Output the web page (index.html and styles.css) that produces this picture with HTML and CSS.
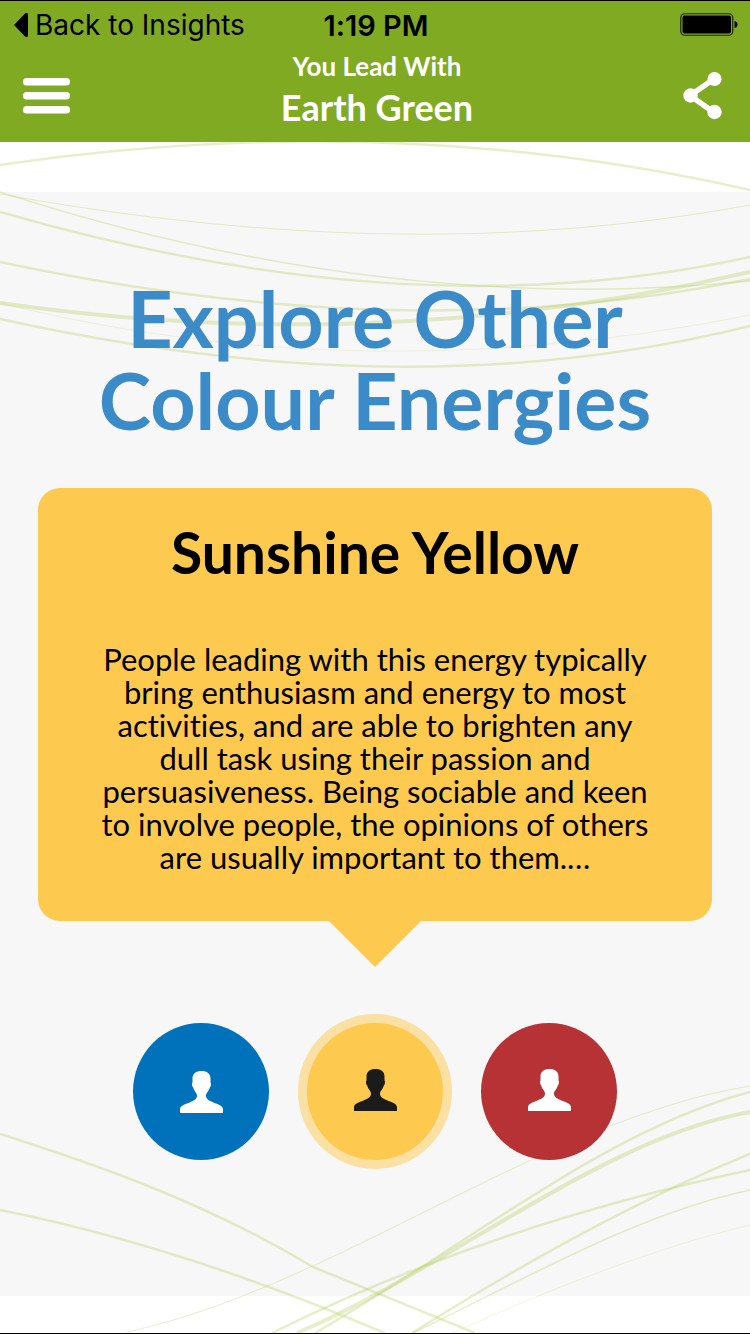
FILE: index.html
```html
<!DOCTYPE html>
<html lang="en">
<head>
<meta charset="utf-8">
<meta name="viewport" content="width=device-width, initial-scale=1">
<title>Explore Other Colour Energies</title>
<link rel="stylesheet" href="styles.css">
</head>
<body>
<header class="top">
  <div class="status">
    <a class="back" href="#"><svg width="14" height="26" viewBox="0 0 14 26" aria-hidden="true"><path d="M0 13 11 1.500Q14 -.5 14 3V23Q14 26.500 11 24.500Z"/></svg>Back to Insights</a>
    <span class="time">1:19 PM</span>
    <svg class="battery" width="58" height="24" viewBox="0 0 58 24" role="img" aria-label="Battery full"><rect x=".75" y=".75" width="52" height="21.500" rx="4" fill="none" stroke="#1c2606" stroke-width="1.200"/><rect x="2.500" y="2.500" width="48.500" height="18" rx="2"/><path d="M54.500 8Q57.500 8.500 57.500 11.500T54.500 15Z"/></svg>
  </div>
  <div class="bar">
    <button class="tool" type="button" aria-label="Menu"><svg width="48" height="36" viewBox="0 0 48 36"><g fill="#fff"><rect width="47" height="7.500" rx="3.500"/><rect y="14" width="47" height="7.500" rx="3.500"/><rect y="28" width="47" height="7.500" rx="3.500"/></g></svg></button>
    <div class="lead"><p class="lead-label">You Lead With</p><p class="lead-name">Earth Green</p></div>
    <button class="tool" type="button" aria-label="Share"><svg width="40" height="48" viewBox="0 0 40 48"><path d="M31 7 7 23.500 31 40.500" fill="none" stroke="#fff" stroke-width="5.500"/><g fill="#fff"><circle cx="31.500" cy="7" r="7"/><circle cx="7.500" cy="23.500" r="7.200"/><circle cx="31.500" cy="40" r="7.200"/></g></svg></button>
  </div>
</header>
<main class="page">
  <svg class="waves waves-top" viewBox="0 142 750 250" preserveAspectRatio="none" aria-hidden="true">
    <path class="mid" d="M0 165C250 128 500 133 750 190"/>
    <path class="fine" d="M0 194C250 239 500 251 750 205"/>
    <path class="thin" d="M0 192C250 273 500 306 750 281"/>
    <path class="mid" d="M0 212C250 284 500 312 750 257"/>
    <path class="mid" d="M0 262C250 315 500 330 750 279"/>
    <path class="thick" d="M0 303C250 339 500 330 750 272"/>
    <path class="faint" d="M0 303C250 365 500 365 750 315"/>
    <path class="mid" d="M0 319C250 374 500 388 750 326"/>
  </svg>
  <svg class="waves waves-bottom" viewBox="0 1080 750 253" preserveAspectRatio="none" aria-hidden="true">
    <path class="mid" d="M0 1134C104 1167 208 1204 313 1267Q360 1286 475 1333"/>
    <path class="mid" d="M0 1210C125 1235 250 1276 375 1329L385 1333"/>
    <path class="fine" d="M127 1332C335 1287 542 1120 750 1086"/>
    <path class="mid" d="M315 1333C460 1250 605 1130 750 1092"/>
    <path class="thick" d="M297 1333C448 1269 599 1139 750 1112"/>
    <path class="mid" d="M272 1333C431 1254 591 1204 750 1170"/>
    <path class="mid" d="M412 1333C525 1262 637 1200 750 1154"/>
    <path class="thin" d="M413 1333C525 1279 637 1214 750 1190"/>
    <path class="faint" d="M452 1333C551 1289 651 1249 750 1225"/>
  </svg>
  <section class="panel">
    <h1 class="title">Explore Other<br>Colour Energies</h1>
    <article class="card">
      <h2 class="card-title">Sunshine Yellow</h2>
      <p class="card-text">People leading with this energy typically<br>bring enthusiasm and energy to most<br>activities, and are able to brighten any<br>dull task using their passion and<br>persuasiveness. Being sociable and keen<br>to involve people, the opinions of others<br>are usually important to them.…</p>
    </article>
    <svg class="pointer" width="92" height="46" viewBox="0 0 92 46" aria-hidden="true"><path d="M0 0H92L46 46Z"/></svg>
    <svg width="0" height="0" class="defs" aria-hidden="true"><symbol id="person" viewBox="0 0 43 42"><path d="M21.500 0C27 0 30.500 2.500 30.500 7.500V11.500C31.500 12.500 31 15.500 29.800 16.500C29 20 26 22 26 24.500C26 28.500 29.500 29.800 33.500 31.500C38 33.300 43 35 43 38V42H0V38C0 35 5 33.300 9.500 31.500C13.500 29.800 17 28.500 17 24.500C17 22 14 20 13.200 16.500C12 15.500 11.500 12.500 12.500 11.500V7.500C12.500 2.500 16 0 21.500 0Z"/></symbol></svg>
    <nav class="energies" aria-label="Colour energies">
      <button class="energy blue" type="button" aria-label="Cool Blue"><svg class="person"><use href="#person"/></svg></button>
      <button class="energy yellow" type="button" aria-label="Sunshine Yellow" aria-current="true"><svg class="person"><use href="#person"/></svg></button>
      <button class="energy red" type="button" aria-label="Fiery Red"><svg class="person"><use href="#person"/></svg></button>
    </nav>
  </section>
</main>
</body>
</html>
```

FILE: styles.css
```css
* { box-sizing: border-box; }

body {
  margin: 0;
  min-height: 100vh;
  display: flex;
  flex-direction: column;
  border-top: 1px solid #000;
  border-bottom: 1px solid #000;
  background: #fff;
  color: #000;
  font-family: Lato, "Open Sans", sans-serif;
  font-variant-ligatures: none;
}

h1, h2, p { margin: 0; }

button {
  padding: 0;
  border: 0;
  background: none;
  cursor: pointer;
}

svg { display: block; }

/* Header */
.top {
  background: #80aa21;
}

.status {
  display: grid;
  grid-template-columns: 1fr auto 1fr;
  align-items: center;
  height: 48px;
  padding: 0 12px 0 14px;
  font-family: Inter, sans-serif;
  font-size: 28px;
}

.back {
  display: flex;
  align-items: center;
  gap: 7px;
  color: #000;
  text-decoration: none;
}

.time {
  font-size: 29px;
  font-weight: 600;
}

.battery { justify-self: end; }

.bar {
  display: flex;
  justify-content: space-between;
  align-items: center;
  height: 93px;
  padding: 0 27px 0 23px;
}

.lead {
  height: 93px;
  color: #fff;
  text-align: center;
  font-weight: 700;
}

.lead-label {
  font-size: 26px;
  line-height: 34px;
}

.lead-name {
  font-size: 36px;
  line-height: 48px;
}

/* Page background */
.page {
  position: relative;
  flex: 1;
  display: flex;
  padding: 50px 0 37px;
}

.waves {
  position: absolute;
  left: 0;
  z-index: 0;
  width: 100%;
  fill: none;
  stroke: rgba(180, 205, 90, 0.32);
}

.waves-top { top: 0; height: 250px; }
.waves-bottom { bottom: 0; height: 253px; }
.mid { stroke-width: 2.500; }
.thin { stroke-width: 1.500; }
.fine { stroke-width: 1; }
.faint { stroke-width: 1; opacity: 0.6; }
.thick { stroke-width: 4; }

/* Content */
.panel {
  flex: 1;
  display: flex;
  flex-direction: column;
  align-items: center;
  padding: 85px 38px;
  background: #f7f7f7;
}

.title, .card, .pointer { z-index: 1; }

.title, .energies {
  position: relative;
  z-index: 1;
}

.title {
  color: #3b8bc9;
  font-size: 79px;
  font-weight: 700;
  line-height: 82px;
  text-align: center;
}

.card {
  width: 100%;
  margin-top: 47px;
  padding: 31px 24px 47px;
  border-radius: 22px;
  background: #fdc94f;
  text-align: center;
}

.card-title {
  font-size: 57px;
  font-weight: 700;
  line-height: 66px;
}

.card-text {
  margin-top: 58px;
  font-size: 31px;
  line-height: 33px;
}

.pointer { fill: #fdc94f; }

.defs { position: absolute; }

.energies {
  display: flex;
  gap: 38px;
  margin-top: 56px;
}

.energy {
  display: flex;
  align-items: center;
  justify-content: center;
  width: 136px;
  height: 137px;
  padding-bottom: 4px;
  border-radius: 50%;
}

.person {
  width: 43px;
  height: 42px;
  fill: #fff;
}

.blue {
  padding-bottom: 0;
  background: #0072bb;
}

.red { background: #b63234; }

.yellow {
  background: #fdc94f;
  box-shadow: 0 0 0 9px #fbe0a3;
}

.yellow .person { fill: #1b1b1b; }
```
